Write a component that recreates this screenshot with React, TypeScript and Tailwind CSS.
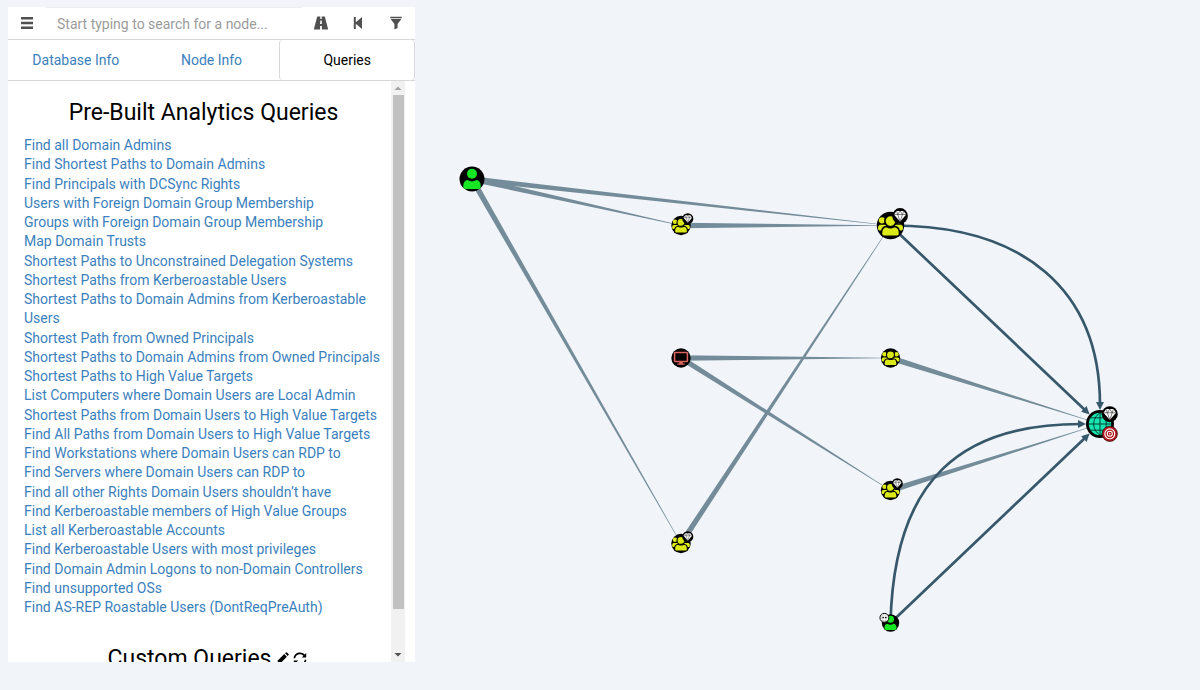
import React, { useState } from "react";

const TABS = ["Database Info", "Node Info", "Queries"];

const QUERIES = [
  "Find all Domain Admins",
  "Find Shortest Paths to Domain Admins",
  "Find Principals with DCSync Rights",
  "Users with Foreign Domain Group Membership",
  "Groups with Foreign Domain Group Membership",
  "Map Domain Trusts",
  "Shortest Paths to Unconstrained Delegation Systems",
  "Shortest Paths from Kerberoastable Users",
  "Shortest Paths to Domain Admins from Kerberoastable Users",
  "Shortest Path from Owned Principals",
  "Shortest Paths to Domain Admins from Owned Principals",
  "Shortest Paths to High Value Targets",
  "List Computers where Domain Users are Local Admin",
  "Shortest Paths from Domain Users to High Value Targets",
  "Find All Paths from Domain Users to High Value Targets",
  "Find Workstations where Domain Users can RDP to",
  "Find Servers where Domain Users can RDP to",
  "Find all other Rights Domain Users shouldn’t have",
  "Find Kerberoastable members of High Value Groups",
  "List all Kerberoastable Accounts",
  "Find Kerberoastable Users with most privileges",
  "Find Domain Admin Logons to non-Domain Controllers",
  "Find unsupported OSs",
  "Find AS-REP Roastable Users (DontReqPreAuth)",
];

type Kind = "user" | "group" | "computer" | "domain";
type Badge = "gem" | "target" | "skull";

interface GraphNode {
  id: string;
  kind: Kind;
  x: number;
  y: number;
  r: number;
  badges?: Badge[];
}

const NODES: GraphNode[] = [
  { id: "user1", kind: "user", x: 472, y: 179, r: 12.5 },
  { id: "group1", kind: "group", x: 681, y: 225.5, r: 9.7, badges: ["gem"] },
  { id: "group2", kind: "group", x: 890.5, y: 225.5, r: 13.7, badges: ["gem"] },
  { id: "computer1", kind: "computer", x: 681, y: 358, r: 9.7 },
  { id: "group3", kind: "group", x: 890.5, y: 358, r: 9.7 },
  { id: "group4", kind: "group", x: 890.5, y: 490.5, r: 9.7, badges: ["gem"] },
  { id: "group5", kind: "group", x: 681, y: 543.5, r: 9.7, badges: ["gem"] },
  { id: "domain1", kind: "domain", x: 1100, y: 424, r: 14, badges: ["gem", "target"] },
  { id: "user2", kind: "user", x: 890.5, y: 623, r: 8.7, badges: ["skull"] },
];

const TAPERED: [string, string][] = [
  ["user1", "group2"],
  ["user1", "group1"],
  ["user1", "group5"],
  ["group1", "group2"],
  ["group5", "group2"],
  ["computer1", "group3"],
  ["computer1", "group4"],
  ["group3", "domain1"],
  ["group4", "domain1"],
];

const ARROWS = [
  "M890.5 225.5 L1086 411",
  "M890.5 225.5 C1024 225 1100 290 1100 405",
  "M890.5 623 C894 480 960 424 1081 424",
  "M890.5 623 L1086 437",
];

const findNode = (id: string) => NODES.find((n) => n.id === id)!;

const Glyph = ({ d, size = 14 }: { d: string; size?: number }) => (
  <svg width={size} height={size} viewBox="0 0 14 14" fill="currentColor" aria-hidden="true">
    <path fillRule="evenodd" d={d} />
  </svg>
);

const GLYPHS = {
  menu: "M1 1h12v2.4H1zM1 5.8h12v2.4H1zM1 10.6h12v2.4H1z",
  road: "M3.2 0.6H6.3V3H7.7V0.6H10.8L14.2 13.4H7.9V10H6.1V13.4H-0.2zM6.3 4.6L6.1 8H7.9L7.7 4.6z",
  back: "M2.8 1h2v5.2L11 1v12L4.8 7.8V13h-2z",
  filter: "M1.2 0.8h11.6v1.1H1.2zM1.4 2.7h11.2L8.6 8v4.1L5.4 13.6V8z",
  pencil: "M0.5 13.5L1.6 9.8 4.2 12.4zM2.3 9L9.2 2.1 11.9 4.8 5 11.7zM10 1.3L11 0.4Q11.5 0 12 0.5L13.5 2Q14 2.5 13.6 3L12.7 4z",
  refresh:
    "M0.6 6.2C1 2.6 3.8 0.6 7 0.6C9 0.6 10.6 1.4 11.7 2.6L13.2 1.1V5.5H8.8L10.5 3.8C9.6 2.8 8.4 2.2 7 2.2C4.6 2.2 2.6 3.8 2.2 6.2zM13.4 7.8C13 11.4 10.2 13.4 7 13.4C5 13.4 3.4 12.6 2.3 11.4L0.8 12.9V8.5H5.2L3.5 10.2C4.4 11.2 5.6 11.8 7 11.8C9.4 11.8 11.4 10.2 11.8 7.8z",
};

/* Edge drawn as a wedge, wide at its source and thin at its target */
const TaperedEdge = ({ from, to }: { from: GraphNode; to: GraphNode }) => {
  const dx = to.x - from.x;
  const dy = to.y - from.y;
  const len = Math.hypot(dx, dy);
  const nx = (-dy / len) * 2.8;
  const ny = (dx / len) * 2.8;
  const tx = to.x - (dx / len) * to.r;
  const ty = to.y - (dy / len) * to.r;
  return (
    <polygon
      points={`${from.x + nx},${from.y + ny} ${tx + nx * 0.1},${ty + ny * 0.1} ${tx - nx * 0.1},${ty - ny * 0.1} ${from.x - nx},${from.y - ny}`}
      fill="#748c99"
    />
  );
};

/* Icons use a box from -10 to 10, the radius of the node */
const KindIcon = ({ kind }: { kind: Kind }) => {
  if (kind === "user") {
    return (
      <g fill="#17e625">
        <circle cx="0" cy="-4.2" r="4" />
        <path d="M-3.6 0.8Q0 3 3.6 0.8Q7 1.2 7 6Q7 8 5 8H-5Q-7 8 -7 6Q-7 1.2 -3.6 0.8z" />
      </g>
    );
  }
  if (kind === "group") {
    return (
      <g fill="#dbe916">
        <circle cx="-6.2" cy="-3.8" r="2.3" />
        <circle cx="6.2" cy="-3.8" r="2.3" />
        <path d="M-7.8 -0.6H-4Q-2 0.4 -3 3.6H-8.2Q-9.2 3.2 -9.2 2Q-9.2 -0.2 -7.8 -0.6z" />
        <path d="M7.8 -0.6H4Q2 0.4 3 3.6H8.2Q9.2 3.2 9.2 2Q9.2 -0.2 7.8 -0.6z" />
        <g stroke="#000" strokeWidth="1.1">
          <path d="M-2.8 0.8Q0 2.4 2.8 0.8Q6.6 1 6.6 5.8Q6.6 7.8 4.8 7.8H-4.8Q-6.6 7.8 -6.6 5.8Q-6.6 1 -2.8 0.8z" />
          <circle cx="0" cy="-3.2" r="4.1" />
        </g>
      </g>
    );
  }
  if (kind === "computer") {
    return (
      <g>
        <rect x="-6.6" y="-5.6" width="13.2" height="9.2" rx="0.8" fill="none" stroke="#df6361" strokeWidth="1.6" />
        <path d="M-1.6 3.8H1.6L2 5.6H3.8V7H-3.8V5.6H-2z" fill="#df6361" />
      </g>
    );
  }
  return (
    <g>
      <circle r="8" fill="#17e6b3" />
      <path
        d="M0 -8V8M-8 0H8M-7 -4.4H7M-7 4.4H7M0 -8C-6 -4 -6 4 0 8M0 -8C6 -4 6 4 0 8"
        fill="none"
        stroke="#03241c"
        strokeWidth="0.6"
      />
    </g>
  );
};

const BadgeIcon = ({ badge }: { badge: Badge }) => {
  if (badge === "target") {
    return (
      <g>
        <circle r="9.6" fill="#b0151b" stroke="#1c0606" strokeWidth="0.8" />
        <circle r="6.2" fill="none" stroke="#fff" strokeWidth="1.5" />
        <circle r="3.2" fill="none" stroke="#fff" strokeWidth="1.3" />
        <circle r="1" fill="#fff" />
      </g>
    );
  }
  if (badge === "skull") {
    return (
      <g>
        <circle r="9" fill="#fff" stroke="#000" strokeWidth="2" />
        <path d="M-5.5 -1C-5.5 -7.5 5.5 -7.5 5.5 -1Q5.5 2 3.5 3V6H-3.5V3Q-5.5 2 -5.5 -1z" fill="#fff" stroke="#777" strokeWidth="0.8" />
        <circle cx="-2.5" cy="-0.6" r="1.7" />
        <circle cx="2.5" cy="-0.6" r="1.7" />
      </g>
    );
  }
  return (
    <g>
      <circle r="10" fill="#000" />
      <path d="M-4.6 -6.4H4.6L7.8 -1.8L0 7.4L-7.8 -1.8z" fill="#fff" />
      <path d="M-7.8 -1.8H7.8M-4.6 -6.4L-3 -1.8L0 7.4L3 -1.8L4.6 -6.4M-3 -1.8L0 -6.4L3 -1.8" fill="none" stroke="#333" strokeWidth="0.8" />
    </g>
  );
};

const BADGE_SIDE: Record<Badge, [number, number]> = {
  gem: [0.7, -0.7],
  target: [0.7, 0.7],
  skull: [-0.7, -0.6],
};

const NodeShape = ({ node }: { node: GraphNode }) => (
  <g transform={`translate(${node.x} ${node.y})`}>
    <circle r={node.r} />
    <g transform={`scale(${node.r / 10})`}>
      <KindIcon kind={node.kind} />
    </g>
    {node.badges?.map((badge) => (
      <g
        key={badge}
        transform={`translate(${BADGE_SIDE[badge][0] * node.r} ${BADGE_SIDE[badge][1] * node.r}) scale(${(node.r * 0.57) / 10})`}
      >
        <BadgeIcon badge={badge} />
      </g>
    ))}
  </g>
);

const Graph = () => (
  <svg className="block h-full w-full" viewBox="415 0 785 690" preserveAspectRatio="xMinYMin meet" role="img" aria-label="Attack paths">
    <defs>
      <marker id="arrow" markerUnits="userSpaceOnUse" markerWidth="9" markerHeight="8" refX="3" refY="4" orient="auto">
        <path d="M0 0L8 4L0 8z" fill="#36586a" />
      </marker>
    </defs>
    {TAPERED.map(([from, to]) => (
      <TaperedEdge key={from + to} from={findNode(from)} to={findNode(to)} />
    ))}
    {ARROWS.map((d) => (
      <path key={d} d={d} fill="none" stroke="#36586a" strokeWidth="2.7" markerEnd="url(#arrow)" />
    ))}
    {NODES.map((node) => (
      <NodeShape key={node.id} node={node} />
    ))}
  </svg>
);

const SearchBar = () => (
  <div className="flex h-8 shrink-0 items-stretch text-[#505050]">
    <button type="button" aria-label="More info" className="flex w-[37px] items-center justify-center">
      <Glyph d={GLYPHS.menu} />
    </button>
    <input
      type="text"
      aria-label="Search for a node"
      placeholder="Start typing to search for a node..."
      className="min-w-0 flex-1 border-t border-[#eeeeee] px-3 text-sm text-black outline-none placeholder:text-[#9b9b9b]"
    />
    <button type="button" aria-label="Pathfinding" className="flex w-[37px] items-center justify-center">
      <Glyph d={GLYPHS.road} />
    </button>
    <button type="button" aria-label="Back" className="flex w-[38px] items-center justify-center">
      <Glyph d={GLYPHS.back} />
    </button>
    <button type="button" aria-label="Filter edges" className="flex w-[38px] items-center justify-center">
      <Glyph d={GLYPHS.filter} />
    </button>
  </div>
);

const App = (): React.JSX.Element => {
  const [tab, setTab] = useState("Queries");

  return (
    <main className="flex h-screen overflow-hidden bg-[#f1f5fa] font-['Roboto',sans-serif] text-black">
      <aside className="flex w-[415px] shrink-0 flex-col pt-[7px] pb-7 pl-2">
        <div className="flex min-h-0 flex-1 flex-col bg-white">
          <SearchBar />
          <nav className="grid h-[42px] shrink-0 grid-cols-3 border-y border-[#d8d8d8] text-sm">
            {TABS.map((name) => (
              <button
                key={name}
                type="button"
                onClick={() => setTab(name)}
                className={
                  tab === name
                    ? "rounded border-x border-[#d8d8d8] text-black"
                    : "text-[#3b7fbd]"
                }
              >
                {name}
              </button>
            ))}
          </nav>
          <div className="flex min-h-0 flex-1 pr-[10px]">
            <div className="min-w-0 flex-1 overflow-hidden pt-4 pr-2 pl-4">
              <h3 className="text-center text-[23px] leading-8">Pre-Built Analytics Queries</h3>
              <ul className="mt-[7px] text-sm leading-snug text-[#3b7fbd]">
                {QUERIES.map((query) => (
                  <li key={query}>
                    <a href="#" className="hover:underline">
                      {query}
                    </a>
                  </li>
                ))}
              </ul>
              <h3 className="mt-[26px] flex items-center justify-center gap-1 pl-2 text-[23px] leading-8">
                <span>Custom Queries</span>
                <button type="button" aria-label="Edit queries">
                  <Glyph d={GLYPHS.pencil} />
                </button>
                <button type="button" aria-label="Refresh queries">
                  <Glyph d={GLYPHS.refresh} />
                </button>
              </h3>
            </div>
            <div className="flex w-[14px] shrink-0 flex-col items-center bg-[#f1f1f1]" aria-hidden="true">
              <svg className="h-[14px] w-[14px] shrink-0" viewBox="0 0 14 14">
                <path d="M3.5 9L7 5.5L10.5 9z" fill="#a3a3a3" />
              </svg>
              <div className="w-[11px] grow-[13] bg-[#c1c1c1]" />
              <div className="grow" />
              <svg className="h-[14px] w-[14px] shrink-0" viewBox="0 0 14 14">
                <path d="M3.5 5L7 8.5L10.5 5z" fill="#505050" />
              </svg>
            </div>
          </div>
        </div>
      </aside>
      <section className="min-w-0 flex-1">
        <Graph />
      </section>
    </main>
  );
};

export default App;
